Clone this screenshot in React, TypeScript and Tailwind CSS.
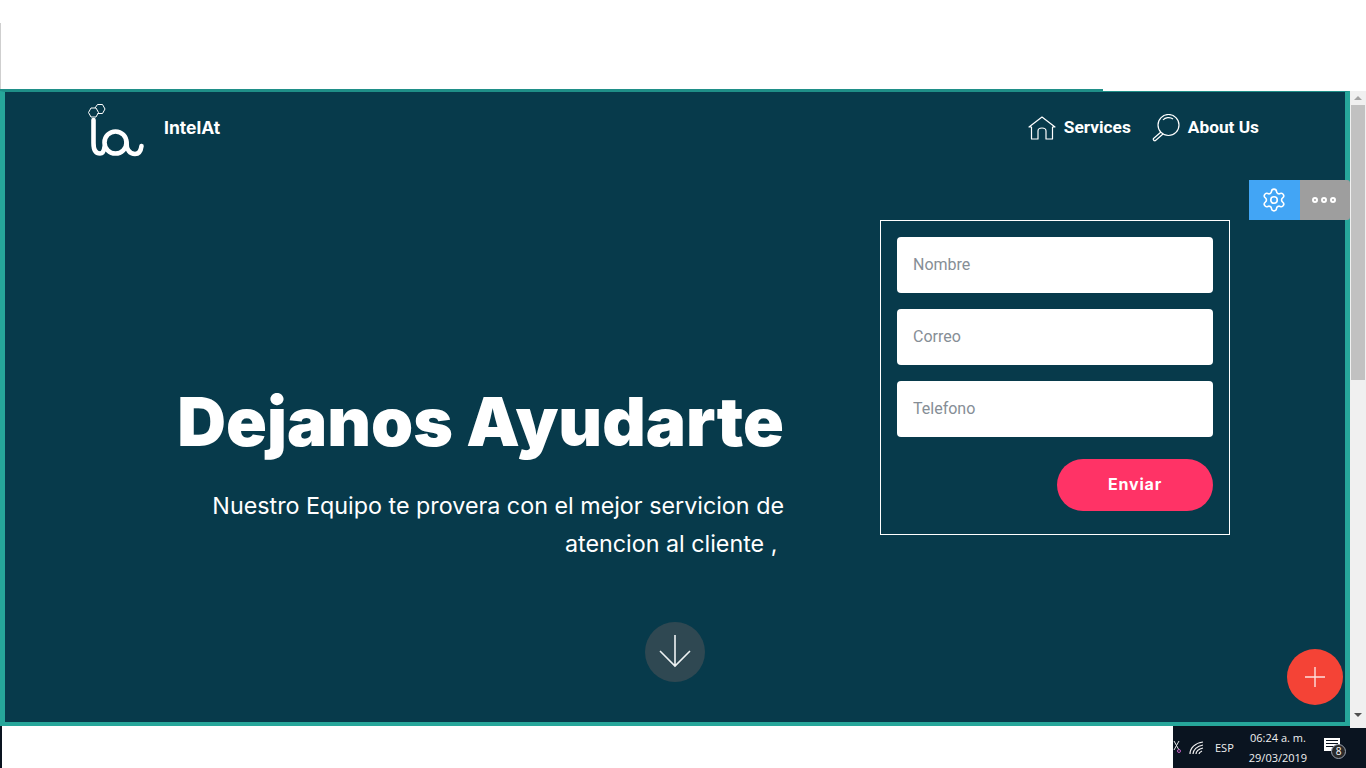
import React from "react";
import { Settings } from "lucide-react";

const FONT = "font-['Roboto','Liberation_Sans',sans-serif]";
const DISPLAY = "font-['Inter','Roboto',sans-serif]";

function Logo() {
  return (
    <svg width="58" height="56" viewBox="0 0 58 56" fill="none" stroke="white">
      <path d="M1.5 9.5 L4 5 L9 5 L11.5 9.5 L9 14 L4 14 Z" strokeWidth="1" />
      <path d="M8 5 L10.5 1.5 L15.5 1.5 L18 6 L15.5 10.5 L10.8 10.5" strokeWidth="1" />
      <g strokeWidth="4.6" strokeLinecap="round">
        <path d="M6.5 17 V40 C6.5 47 9 50.5 13 50.5 C15.5 50.5 17 48 17.5 44" />
        <circle cx="28.5" cy="39.5" r="11" />
        <path d="M39.5 39.5 C39.5 47 43 51 48 51 C52 51 54 47 54.5 43" />
      </g>
    </svg>
  );
}

function HomeIcon() {
  return (
    <svg width="28" height="24" viewBox="0 0 28 24" fill="none" stroke="white" strokeWidth="1.2" strokeLinejoin="round">
      <path d="M1 11 L14 1 L27 11 L24.5 11 V23 H18 V15 C18 11 10 11 10 15 V23 H3.5 V11 Z" />
    </svg>
  );
}

function SearchIcon() {
  return (
    <svg width="28" height="28" viewBox="0 0 28 28" fill="none" stroke="white" strokeWidth="1.2" strokeLinejoin="round">
      <circle cx="16.5" cy="11" r="10.5" />
      <path d="M9 18 L1.5 24.5 C0.5 25.5 2.5 27.5 3.5 26.5 L11 20" />
      <path d="M11 6 C13 3.5 18 2.5 21 5" />
    </svg>
  );
}

function NavLink({ icon, label }: { icon: React.ReactNode; label: string }) {
  return (
    <a className="flex items-center gap-[8px] text-[17.3px] font-bold text-white">
      {icon}
      <span>{label}</span>
    </a>
  );
}

function Field({ placeholder }: { placeholder: string }) {
  return (
    <input
      placeholder={placeholder}
      className="h-[56px] w-full rounded-[4px] bg-white px-[16px] pb-[2px] text-[16px] text-gray-700 outline-none placeholder:text-[#868e96]"
    />
  );
}

function Scrollbar() {
  return (
    <div className="relative z-10 flex h-[637px] w-[16px] flex-col items-center bg-[#f0f0f0]">
      <div className="flex h-[14px] items-center">
        <div className="h-0 w-0 border-x-[4px] border-b-[4px] border-x-transparent border-b-[#a3a3a3]" />
      </div>
      <div className="h-[275px] w-[14px] bg-[#c1c1c1]" />
      <div className="flex-1" />
      <div className="mb-[6px] flex h-[14px] items-center">
        <div className="h-0 w-0 border-x-[4px] border-t-[4px] border-x-transparent border-t-[#505050]" />
      </div>
    </div>
  );
}

function Taskbar() {
  return (
    <div className="flex w-[193px] items-center bg-[#0a1420] pt-[2px] text-[#f0f0f0] font-['Open_Sans','Noto_Sans',sans-serif]">
      <svg width="8" height="14" viewBox="0 0 8 14" fill="none" stroke="#e8e8e8" strokeWidth="1" className="mb-[2px] shrink-0">
        <path d="M1 1 L6 10 M6 1 L1 10" />
        <circle cx="6" cy="11" r="1.5" stroke="#c060c0" />
      </svg>
      <svg width="16" height="14" viewBox="0 0 16 14" fill="none" stroke="#f0f0f0" strokeWidth="1.2" className="ml-[8px] shrink-0">
        <path d="M1 13 C1 7 6 2 14 1 M4 13 C4 9 8 5 14 4 M7 13 C7 10 10 8 14 7 M10 13 C10 12 11 11 13 10" />
      </svg>
      <span className="ml-[10px] text-[11px]">ESP</span>
      <div className="ml-[15px] flex flex-col items-center text-[11px] leading-[20px]">
        <span>06:24 a. m.</span>
        <span>29/03/2019</span>
      </div>
      <div className="relative ml-[17px] h-[20px] w-[20px]">
        <div className="flex h-[13px] w-[16px] flex-col gap-[2px] bg-white px-[2px] pt-[2px]">
          <div className="h-px bg-[#0a1420]" />
          <div className="h-px bg-[#0a1420]" />
          <div className="h-px bg-[#0a1420]" />
        </div>
        <div className="absolute left-[7px] top-[6px] flex h-[15px] w-[15px] items-center justify-center rounded-full border border-gray-400 bg-[#2a2a2a] text-[10px] text-white">
          8
        </div>
      </div>
    </div>
  );
}

export default function App() {
  return (
    <div className={`flex h-screen flex-col overflow-hidden bg-white ${FONT}`}>
      {/* Top blank strip */}
      <div className="flex h-[91px] flex-col">
        <div className="mt-[23px] h-[66px] w-px bg-[#cfcfcf]" />
        <div className="h-[2px] w-[1103px] bg-[#1f8f88]" />
      </div>

      <div className="flex h-[635px]">
        <section className="relative w-[1350px] border-x-[5px] border-b-[4px] border-t border-x-[#26a69a] border-b-[#26a69a] border-t-[#1f8f88] bg-[#073a4b]">
          {/* Nav */}
          <nav className="flex h-[128px] items-start justify-between pl-[82px] pr-[86px] pt-[11px]">
            <div className="flex items-start">
              <Logo />
              <span className={`ml-[19px] mt-[12px] text-[17.5px] font-bold text-white ${DISPLAY}`}>IntelAt</span>
            </div>
            <div className="flex items-center gap-[21px] pt-[11px]">
              <NavLink icon={<HomeIcon />} label="Services" />
              <NavLink icon={<SearchIcon />} label="About Us" />
            </div>
          </nav>

          {/* Hero */}
          <div className="flex">
            <div className={`flex w-[779px] flex-col items-end pt-[162px] text-right text-white ${DISPLAY}`}>
              <h1 className="whitespace-nowrap text-[67.5px] font-black leading-[80px]">Dejanos Ayudarte</h1>
              <p className="mt-[25px] w-[600px] text-[23.3px] leading-[38px]">
                Nuestro Equipo te provera con el mejor servicion de
                <br />
                atencion al cliente ,&nbsp;
              </p>
            </div>
            <form className="ml-[96px] flex h-[315px] w-[350px] flex-col gap-[16px] border border-white p-[16px]">
              <Field placeholder="Nombre" />
              <Field placeholder="Correo" />
              <Field placeholder="Telefono" />
              <button
                type="button"
                className={`ml-auto mt-[6px] h-[52px] w-[156px] rounded-full bg-[#ff3366] pb-[2px] text-[16px] font-bold tracking-[0.8px] text-white ${DISPLAY}`}
              >
                Enviar
              </button>
            </form>
          </div>

          {/* Scroll down */}
          <div className="mx-auto mt-[59px] flex h-[60px] w-[60px] items-center justify-center rounded-full bg-[#2f4852] pb-[3px]">
            <svg width="32" height="34" viewBox="0 0 32 34" fill="none" stroke="#eef2f3" strokeWidth="1.6">
              <path d="M16 1 V32 M1 17 L16 32 L31 17" />
            </svg>
          </div>

          {/* Floating controls */}
          <div className="absolute left-[1244px] top-[88px] flex h-[40px]">
            <div className="flex w-[51px] items-center justify-center bg-[#42a5f5] pr-[2px]">
              <Settings size={26} strokeWidth={1.5} color="white" />
            </div>
            <div className="flex w-[50px] items-center justify-center gap-[3px] rounded-r-[3px] bg-[#9e9e9e] pr-[2px]">
              <span className="h-[6px] w-[6px] rounded-full border-2 border-white" />
              <span className="h-[6px] w-[6px] rounded-full border-2 border-white" />
              <span className="h-[6px] w-[6px] rounded-full border-2 border-white" />
            </div>
          </div>
          <div className="absolute left-[1282px] top-[557px] flex h-[56px] w-[56px] items-center justify-center rounded-full bg-[#f44336]">
            <svg width="20" height="20" viewBox="0 0 20 20" stroke="#fde0dd" strokeWidth="1.4">
              <path d="M10 0 V20 M0 10 H20" />
            </svg>
          </div>
        </section>
        <Scrollbar />
      </div>

      {/* Bottom strip */}
      <div className="flex flex-1">
        <div className="w-[2px] bg-[#0a1420]" />
        <div className="flex-1 bg-white" />
        <Taskbar />
      </div>
    </div>
  );
}
